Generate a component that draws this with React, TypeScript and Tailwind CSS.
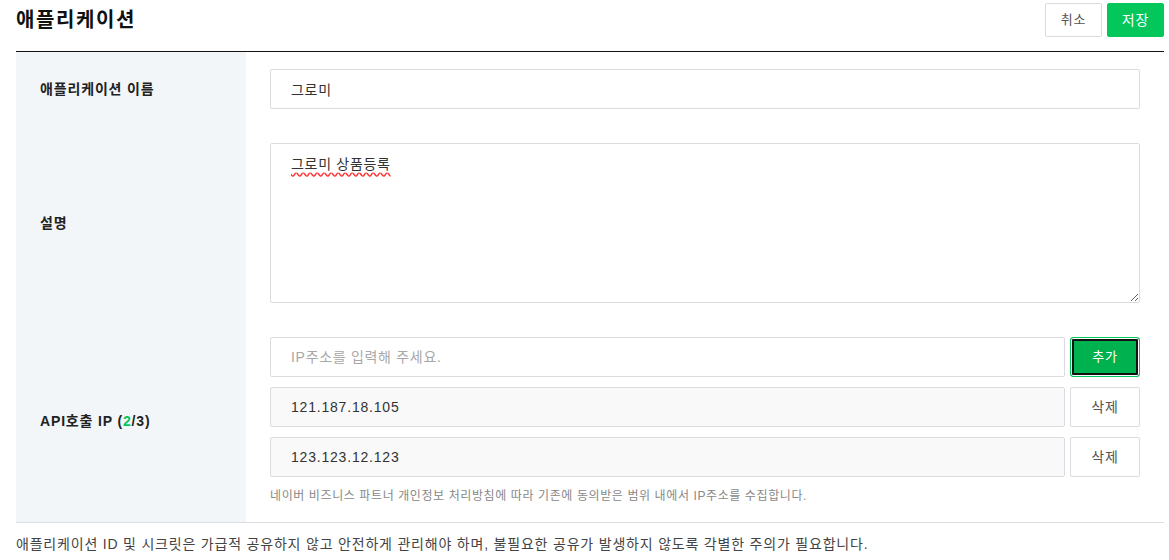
import { useState } from 'react'

const font = { fontFamily: '"Liberation Sans", "Noto Sans CJK KR", sans-serif' }

export default function App() {
  const [name, setName] = useState('그로미')
  const [desc, setDesc] = useState('그로미 상품등록')
  const [ip, setIp] = useState('')
  const ips = ['121.187.18.105', '123.123.12.123']

  return (
    <div className="bg-white pl-4 pr-[5px] text-[#333] tracking-[0.05em]" style={font}>
      {/* Header */}
      <div className="flex items-start justify-between h-[52px] border-b border-[#111]">
        <h1 className="mt-[6px] text-[20px] font-bold text-[#111] leading-[28px] tracking-[0.08em]">애플리케이션</h1>
        <div className="flex gap-[5px] mt-[3px]">
          <button className="w-[57px] h-[34px] text-[13px] text-[#555] bg-white border border-[#dcdcdc] rounded-[2px]">
            취소
          </button>
          <button className="w-[57px] h-[34px] text-[14px] text-white bg-[#03c75a] border border-[#03c75a] rounded-[2px]">
            저장
          </button>
        </div>
      </div>

      {/* Form table */}
      <div className="border-b border-[#dddde3]">
        <div className="flex">
          <div className="w-[230px] shrink-0 bg-[#f3f6f9] pl-6 flex items-center text-[14px] font-bold text-[#222] tracking-[0.06em]">
            애플리케이션 이름
          </div>
          <div className="flex-1 px-6 py-[17px]">
            <input
              value={name}
              onChange={(e) => setName(e.target.value)}
              className="w-full h-[40px] px-[20px] text-[14px] tracking-[0.05em] text-[#333] border border-[#dcdce0] rounded-[2px] outline-none"
            />
          </div>
        </div>

        <div className="flex">
          <div className="w-[230px] shrink-0 bg-[#f3f6f9] pl-6 flex items-center text-[14px] font-bold text-[#222] tracking-[0.06em]">
            설명
          </div>
          <div className="flex-1 px-6 py-[17px]">
            <textarea
              value={desc}
              onChange={(e) => setDesc(e.target.value)}
              className="block w-full h-[160px] px-[20px] py-[10px] text-[14px] leading-[20px] tracking-[0.05em] text-[#333] border border-[#dcdce0] rounded-[2px] outline-none underline decoration-wavy decoration-[#f33] underline-offset-[3px]"
            />
          </div>
        </div>

        <div className="flex">
          <div className="w-[230px] shrink-0 bg-[#f3f6f9] pl-6 flex items-center text-[14px] font-bold text-[#222] tracking-[0.06em]">
            API호출 IP (<span className="text-[#03c75a]">2</span>/3)
          </div>
          <div className="flex-1 px-6 py-[17px]">
            <div className="flex flex-col gap-[10px]">
              <div className="flex gap-[5px]">
                <input
                  value={ip}
                  onChange={(e) => setIp(e.target.value)}
                  placeholder="IP주소를 입력해 주세요."
                  className="flex-1 h-[40px] px-[20px] text-[14px] tracking-[0.05em] text-[#333] placeholder:text-[#a8a8a8] border border-[#dcdce0] rounded-[2px] outline-none"
                />
                <button className="w-[70px] h-[40px] text-[13px] text-white bg-[#00b150] border border-[#03c75a] rounded-[3px] shadow-[inset_0_0_0_1px_#fff,inset_0_0_0_3px_#111]">
                  추가
                </button>
              </div>
              {ips.map((v) => (
                <div key={v} className="flex gap-[5px]">
                  <div className="flex-1 h-[40px] px-[20px] flex items-center text-[14px] text-[#333] bg-[#f9f9f9] border border-[#dcdce0] rounded-[2px]">
                    {v}
                  </div>
                  <button className="w-[70px] h-[40px] text-[14px] text-[#555] bg-white border border-[#dcdce0] rounded-[2px]">
                    삭제
                  </button>
                </div>
              ))}
            </div>
            <p className="mt-[10px] text-[12px] leading-[18px] text-[#888] tracking-[0.05em]">
              네이버 비즈니스 파트너 개인정보 처리방침에 따라 기존에 동의받은 범위 내에서 IP주소를 수집합니다.
            </p>
          </div>
        </div>
      </div>

      <p className="mt-[11px] text-[14px] leading-[20px] text-[#444]">
        애플리케이션 ID 및 시크릿은 가급적 공유하지 않고 안전하게 관리해야 하며, 불필요한 공유가 발생하지 않도록 각별한 주의가 필요합니다.
      </p>
    </div>
  )
}
